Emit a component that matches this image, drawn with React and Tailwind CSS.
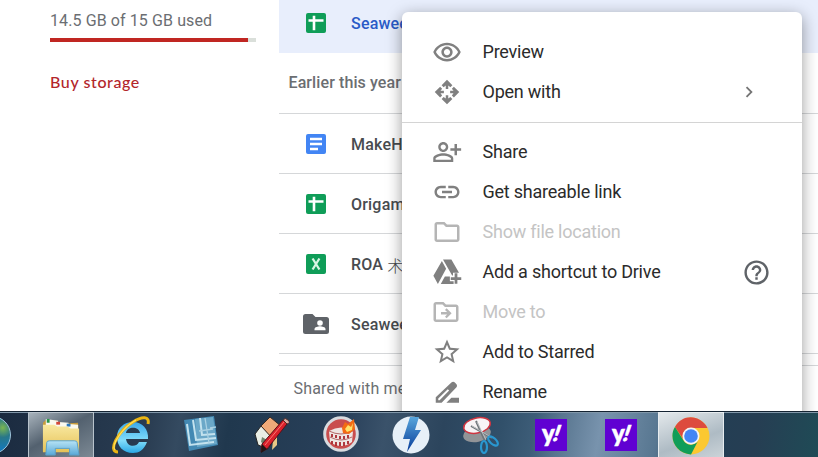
import React from "react";

const Glyph = ({ d, className = "size-[30px] text-[#808080]" }) => (
  <svg viewBox="0 0 24 24" fill="currentColor" className={`shrink-0 ${className}`}>
    <path d={d} />
  </svg>
);

const EYE = "M12 6.5c3.79 0 7.17 2.13 8.82 5.5-1.65 3.37-5.02 5.5-8.82 5.5S4.83 15.37 3.18 12C4.83 8.63 8.21 6.5 12 6.5m0-2C7 4.5 2.73 7.61 1 12c1.73 4.39 6 7.5 11 7.5s9.27-3.11 11-7.5c-1.73-4.39-6-7.5-11-7.5zm0 5c1.38 0 2.5 1.12 2.5 2.5s-1.12 2.5-2.5 2.5-2.5-1.12-2.5-2.5 1.12-2.5 2.5-2.5m0-2c-2.48 0-4.5 2.02-4.5 4.5s2.02 4.5 4.5 4.5 4.5-2.02 4.5-4.5-2.02-4.5-4.5-4.5z";
const OPEN_WITH = "M12 2.200l4.300 4.300-1.600 1.600L13 6.800v2.700h-2V6.800L9.300 8.100 7.700 6.500zM12 21.800l-4.300-4.300 1.600-1.600 1.700 1.300v-2.700h2v2.700l1.700-1.300 1.600 1.600zM2.200 12l4.300-4.300 1.600 1.600L6.800 11h2.700v2H6.800l1.300 1.700-1.600 1.600zM21.800 12l-4.300 4.300-1.600-1.600 1.300-1.700h-2.700v-2h2.700l-1.300-1.700 1.600-1.600z";
const LINK = "M3.9 12c0-1.71 1.39-3.1 3.1-3.1h4V7H7c-2.76 0-5 2.24-5 5s2.24 5 5 5h4v-1.9H7c-1.71 0-3.1-1.39-3.1-3.1zM8 13h8v-2H8v2zm9-6h-4v1.9h4c1.71 0 3.1 1.39 3.1 3.1s-1.39 3.1-3.1 3.1h-4V17h4c2.76 0 5-2.24 5-5s-2.24-5-5-5z";
const SHARE = "M9 12c2.21 0 4-1.79 4-4s-1.79-4-4-4-4 1.79-4 4 1.79 4 4 4zm0-6.1c1.16 0 2.1.94 2.1 2.1s-.94 2.1-2.1 2.1S6.900 9.160 6.900 8 7.840 5.900 9 5.900zM9 13c-2.670 0-8 1.340-8 4v3h16v-3c0-2.660-5.330-4-8-4zm6.100 5.100H2.900V17c0-.64 3.130-2.100 6.100-2.100s6.100 1.460 6.100 2.100v1.100zM20 9V5.500h-2V9h-3.300v2H18v3.500h2V11h3.300V9z";
const FOLDER = "M9.170 6l2 2H20v10H4V6h5.170M10 4H4c-1.100 0-1.990.9-1.990 2L2 18c0 1.100.9 2 2 2h16c1.100 0 2-.9 2-2V8c0-1.100-.9-2-2-2h-8l-2-2z";
const MOVE = FOLDER + "M12.500 9l4 4-4 4-1.300-1.300 1.700-1.700H8v-2h4.900l-1.700-1.700z";
const STAR = "M22 9.240l-7.190-.62L12 2 9.190 8.630 2 9.240l5.460 4.730L5.820 21 12 17.270 18.180 21l-1.630-7.030L22 9.240zM12 15.400l-3.760 2.270 1-4.280-3.320-2.880 4.380-.38L12 6.100l1.710 4.040 4.380.38-3.320 2.880 1 4.280L12 15.400z";
const HELP = "M11 18h2v-2h-2v2zm1-16C6.480 2 2 6.480 2 12s4.480 10 10 10 10-4.480 10-10S17.520 2 12 2zm0 18c-4.410 0-8-3.590-8-8s3.590-8 8-8 8 3.590 8 8-3.590 8-8 8zm0-14c-2.210 0-4 1.790-4 4h2c0-1.100.9-2 2-2s2 .9 2 2c0 2-3 1.750-3 5h2c0-2.250 3-2.500 3-5 0-2.210-1.790-4-4-4z";
const DRIVE = "M8.800 2h6.700l6.100 10.500h-4.800v2.300h-.7L8.800 2zM7.900 3.200l3.400 6.100L4.700 21.500 1.100 15zM10.300 15.500h4v3.800h3v2.200H7zM18.100 13h2.200v3.100h3.100v2.200h-3.100v3.100h-2.200v-3.100H15v-2.200h3.100z";
const RENAME = "M15.500 4.400c.8-.8 2-.8 2.800 0l1.100 1.100c.8.8.8 2 0 2.800L7.700 20.500H3v-4.300zM12.600 9.700L5 17.200v1.300h1.100l7.600-7.700zM21.600 20.500H11.500l4-4h6.100z";

const FileIcon = ({ kind }) => {
  if (kind === "folder")
    return (
      <svg viewBox="0 0 26 21" className="h-[21px] w-[26px]">
        <path d="M2.500 0h7l3 3h11a2.500 2.500 0 0 1 2.500 2.500v12a2.500 2.500 0 0 1-2.500 2.500h-21A2.500 2.500 0 0 1 0 17.500v-15A2.500 2.500 0 0 1 2.500 0z" fill="#5f6368" />
        <circle cx="17" cy="9" r="2.800" fill="#fff" />
        <path d="M11.500 16.300v-1.300c0-1.900 3.500-2.800 5.500-2.800s5.500.9 5.500 2.800v1.300z" fill="#fff" />
      </svg>
    );
  return (
    <svg viewBox="0 0 20 20" className="size-5">
      <rect width="20" height="20" rx="2" fill={kind === "doc" ? "#4285f4" : "#0f9d58"} />
      {kind === "doc" && <path d="M4 5h12M4 10h12M4 15h8" stroke="#fff" strokeWidth="2.300" />}
      {kind === "sheet" && <path d="M2.500 7.500h15M8 2.800v14.400" stroke="#fff" strokeWidth="2.600" />}
      {kind === "excel" && <path d="M6.600 4.500l6.800 11M13.400 4.500l-6.800 11" stroke="#d8f5e4" strokeWidth="2.300" />}
    </svg>
  );
};

const FileRow = ({ kind, name, children }) => (
  <div className="flex h-[60px] items-center border-b border-[#d5d7d9]">
    <div className="ml-6 flex w-[26px] justify-center pt-px"><FileIcon kind={kind} /></div>
    <span className="ml-[22px] flex h-6 translate-y-px items-center whitespace-pre text-base leading-6 font-medium tracking-[0.2px] text-[#484b4f]">{name}{children}</span>
  </div>
);

const MenuItem = ({ d, label, off, children, nudge = "" }) => (
  <div className="flex h-10 shrink-0 items-center pl-[30px]">
    <Glyph d={d} className={off ? `size-[30px] text-[#b5b5b5] ${nudge}` : "size-[30px] text-[#808080]"} />
    <span className={`ml-[20.500px] text-[18px] leading-10 tracking-[-0.23px] ${off ? "text-[#c4c4c4]" : "text-[#2b2b2b]"}`}>{label}</span>
    {children}
  </div>
);

const Slot = ({ children, active }) => (
  <div className={`flex h-[46px] w-[66px] shrink-0 items-start justify-center pt-1 ${active || ""}`}>{children}</div>
);

const Yahoo = () => (
  <div className="mt-[3px] flex size-8 items-center justify-center bg-[#6001d2] pb-[5px] font-['Lato'] text-[24px] leading-6 font-black text-white [-webkit-text-stroke:0.6px_white]">
    y<span className="-ml-px -skew-x-[18deg] text-[22px]">!</span>
  </div>
);

const Explorer = () => (
  <svg viewBox="0 0 42 40" className="mt-px h-[38px] w-10">
    <defs>
      <linearGradient id="fold" x2="0" y2="1"><stop stopColor="#f8e8a0" /><stop offset="1" stopColor="#e6c257" /></linearGradient>
      <linearGradient id="stand" x2="0" y2="1"><stop stopColor="#b7e3f5" /><stop offset="1" stopColor="#59a9d7" /></linearGradient>
    </defs>
    <path d="M2 5l3-3 12 1 2 3 20-1 1 30H2z" fill="#c69b3c" />
    <path d="M5 1l13 2v6H5zM15 4l14 1v6H15zM26 6l13 1v5H26z" fill="#faf9ef" />
    <path d="M6 1h3v4H6z" fill="#289448" /><path d="M16 4h4v3h-4z" fill="#d44736" /><path d="M27 6h4v3h-4z" fill="#2e78bd" />
    <path d="M2 7h12l3 2h11l3 2h9v25H2z" fill="url(#fold)" />
    <path d="M6 26q0-2 3-2h26q3 0 3 2l2 13H30v-7H15v7H5z" fill="url(#stand)" stroke="#58a0c8" />
  </svg>
);

const Ie = () => (
  <svg viewBox="0 0 40 40" className="size-10">
    <defs><linearGradient id="ie" x2="0" y2="1"><stop stopColor="#39a7e9" /><stop offset=".6" stopColor="#82ddfa" /><stop offset="1" stopColor="#29a7e4" /></linearGradient></defs>
    <path d="M37 23H15c1 8 10 9 13 3h8c-3 8-8 11-14 11C12 37 6 30 6 21S13 6 22 6s16 7 15 17zM15 17h14c-1-7-13-7-14 0z" fill="url(#ie)" />
    <path d="M7 36C-4 36 7 15 22 6c9-6 17-6 15 2" fill="none" stroke="#eab513" strokeWidth="3" />
    <path d="M4 34C0 29 11 12 25 4" fill="none" stroke="#ffdf5c" strokeWidth="1.200" />
  </svg>
);

const Blueprint = () => (
  <svg viewBox="0 0 36 36" className="size-9">
    <path d="M1 4l30-4 4 29-29 6z" fill="#4389b3" />
    <path d="M12 3l18-2 4 27-20 3z" fill="#6ba8c8" />
    <path d="M4 8l3 21 24-3M10 4l3 20 20-2M17 2l2 17 13-1" fill="none" stroke="#c3e2ee" strokeWidth="2" />
    <path d="M22 2l4 25M27 12l6-1M16 15l14-2" stroke="#a9d0e2" strokeWidth="1.300" />
  </svg>
);

const House = () => (
  <svg viewBox="0 0 36 38" className="h-[38px] w-9">
    <path d="M2 18L8 10l13 12-6 11-10-4z" fill="#e9eee5" stroke="#222" />
    <path d="M8 10l9-9 12 10-9 12z" fill="#efaa79" stroke="#392b23" />
    <path d="M20 24l4-6v11l-5 5z" fill="#e8c987" /><path d="M9 21l5 3-2 5-4-3z" fill="#71866e" />
    <path d="M9 28L30 4l4 4-20 25-6 3z" fill="#d9202b" stroke="#571016" />
    <path d="M30 4q2-3 5 0t-1 4z" fill="#d9ada0" stroke="#4e2a26" /><path d="M9 28l-1 9 6-4z" fill="#201515" />
    <path d="M12 29L31 6" stroke="#fa7770" />
  </svg>
);

const Nero = () => (
  <svg viewBox="0 0 36 36" className="size-9">
    <circle cx="18" cy="18" r="16.300" fill="#c94d4d" stroke="#d8dbdf" strokeWidth="3" />
    <path d="M6 15q12-7 24 0l-1 11q-11 8-22 0z" fill="#eee5e2" />
    <path d="M6 15q12 6 24 0M7 21q11 6 22 0" fill="none" stroke="#b46a6a" strokeWidth="1" />
    <path d="M9 18v3m4-2v3m4-2v3m4-3v3m4-4v3M9 25v3m4-2v4m4-4v4m4-4v4m4-5v3" stroke="#a8272e" strokeWidth="1.800" />
    <path d="M19 12l3-6 3 2 6-5 1 10-6 5-6-1z" fill="#f36b13" /><path d="M22 13l3-4 3 2 2-4-1 7-5 2z" fill="#ffe169" />
  </svg>
);

const Daemon = () => (
  <svg viewBox="0 0 38 38" className="size-[38px]">
    <defs><linearGradient id="bolt" x2="0" y2="1"><stop stopColor="#57a5dc" /><stop offset="1" stopColor="#073b98" /></linearGradient></defs>
    <circle cx="19" cy="19" r="18.500" fill="#e7f0f8" />
    <path d="M18 1h9l-4 13h6L15 36l3-13h-7z" fill="url(#bolt)" />
  </svg>
);

const Snip = () => (
  <svg viewBox="0 0 38 38" className="size-[38px]">
    <ellipse cx="15" cy="18" rx="14" ry="8" transform="rotate(-12 15 18)" fill="#929497" />
    <ellipse cx="15" cy="9.500" rx="13.500" ry="7.500" transform="rotate(-12 15 9.500)" fill="#f8f4f6" stroke="#cf3541" strokeWidth="1.500" />
    <path d="M14 5l9 20M9 10l21 12" stroke="#6e7479" strokeWidth="2" />
    <path d="M15 6l9 18M10 10l19 11" stroke="#d8dde0" strokeWidth=".7" />
    <ellipse cx="22" cy="31" rx="3" ry="6" fill="none" stroke="#2997d0" strokeWidth="2.200" />
    <ellipse cx="31" cy="25" rx="3" ry="6" transform="rotate(-48 31 25)" fill="none" stroke="#2997d0" strokeWidth="2.200" />
  </svg>
);

const Chrome = () => (
  <svg viewBox="0 0 38 38" className="size-[38px]">
    <circle cx="19" cy="19" r="18.500" fill="#fbc831" />
    <path d="M3 10C10-3 28-3 35.500 11H19a8.500 8.500 0 0 0-8 11z" fill="#dd4b3e" />
    <path d="M3 10L11.500 23.500A8.500 8.500 0 0 0 26 24l-7 13.500C4 37-4 21 3 10z" fill="#109d58" />
    <circle cx="19" cy="19" r="8.500" fill="#f4f4f4" /><circle cx="19" cy="19" r="6.800" fill="#4385f5" />
  </svg>
);

export default function App() {
  return (
    <div className="relative h-[457px] w-[818px] overflow-hidden bg-white font-['Roboto',sans-serif]">
      <div className="relative flex h-[411px] overflow-hidden">
        <aside className="w-[279px] shrink-0 pl-[50px] pt-[9px]">
          <div className="text-base leading-6 tracking-[0.1px] text-[#6b6e72]">14.5 GB of 15 GB used</div>
          <div className="mt-[5px] h-1 w-[206px] bg-[#dadfda]"><div className="h-1 w-[198px] bg-[#c02622]" /></div>
          <div className="mt-7 font-['Lato',sans-serif] text-base leading-6 font-medium tracking-[0.6px] text-[#b3262b]">Buy storage</div>
        </aside>
        <main className="flex-1">
          <div className="flex h-[53px] items-center bg-[#e8eefc] pb-[7px]">
            <div className="ml-[27px]"><FileIcon kind="sheet" /></div>
            <span className="ml-[25px] pt-0.5 text-base leading-6 font-medium tracking-[0.2px] text-[#2a5bc7]">Seaweed</span>
          </div>
          <div className="flex h-[61px] items-center border-b border-[#d5d7d9] pl-[9.500px] text-base font-medium tracking-[0.1px] text-[#6b6e72]">Earlier this year</div>
          <FileRow kind="doc" name="MakeHuman" />
          <FileRow kind="sheet" name="Origami" />
          <FileRow kind="excel" name="ROA "><span className="font-['Noto_Sans_CJK_JP',sans-serif] font-light">术</span></FileRow>
          <FileRow kind="folder" name="Seaweed" />
          <div className="mt-[11px] border-t border-[#d5d7d9] pl-[14.500px] pt-[11px] text-base leading-6 tracking-[0.2px] text-[#6b6e72]">Shared with me</div>
        </main>
        <div className="absolute left-[402px] top-3 flex h-[430px] w-[400px] flex-col rounded-t-md bg-white pt-5 shadow-[0_4px_16px_rgba(0,0,0,0.4)]">
          <MenuItem d={EYE} label="Preview" />
          <MenuItem d={OPEN_WITH} label="Open with">
            <Glyph d="M8.590 16.590L13.170 12 8.590 7.410 10 6l6 6-6 6z" className="mr-[42.500px] ml-auto size-[22px] text-[#757575]" />
          </MenuItem>
          <div className="mt-[10px] mb-[9px] h-px shrink-0 bg-[#d4d4d4]" />
          <MenuItem d={SHARE} label="Share" />
          <MenuItem d={LINK} label="Get shareable link" />
          <MenuItem d={FOLDER} label="Show file location" off />
          <MenuItem d={DRIVE} label="Add a shortcut to Drive">
            <Glyph d={HELP} className="mr-[31px] ml-auto size-[29px] text-[#5f6368]" />
          </MenuItem>
          <MenuItem d={MOVE} label="Move to" off nudge="-translate-x-px" />
          <MenuItem d={STAR} label="Add to Starred" />
          <MenuItem d={RENAME} label="Rename" />
        </div>
      </div>
      <footer className="flex h-[46px] gap-1 overflow-hidden border-t border-[#142332] bg-[linear-gradient(100deg,#1b2b40_0%,#293c51_18%,#344a60_22%,#20384e_28%,#29405a_42%,#3a526a_47%,#2c455d_54%,#31506a_61%,#3d5d78_65%,#58758f_68%,#7893ad_73%,#587791_80%,#233e54_86%,#263e53_92%,#1f4b56_100%)] shadow-[inset_0_1px_0_#8298aa]">
        <div className="w-6 shrink-0 overflow-hidden pt-1">
          <div className="-ml-[27px] size-[38px] rounded-full border border-[#9ec5dc] bg-[radial-gradient(circle_at_80%_30%,#7ab651_0%,#287789_25%,#1679b6_55%,#083c70_100%)]" />
        </div>
        <Slot active="border border-[#b8c3cc] bg-[linear-gradient(150deg,#a7b2bb,#53616f_45%,#7c8994)]"><Explorer /></Slot>
        <Slot><Ie /></Slot>
        <Slot><Blueprint /></Slot>
        <Slot><House /></Slot>
        <Slot><Nero /></Slot>
        <Slot><Daemon /></Slot>
        <Slot><Snip /></Slot>
        <Slot><Yahoo /></Slot>
        <Slot><Yahoo /></Slot>
        <Slot active="border border-[#e7ecef] bg-[linear-gradient(160deg,#e3e8eb,#aebbc4_60%,#cbd3d8)]"><Chrome /></Slot>
      </footer>
    </div>
  );
}
